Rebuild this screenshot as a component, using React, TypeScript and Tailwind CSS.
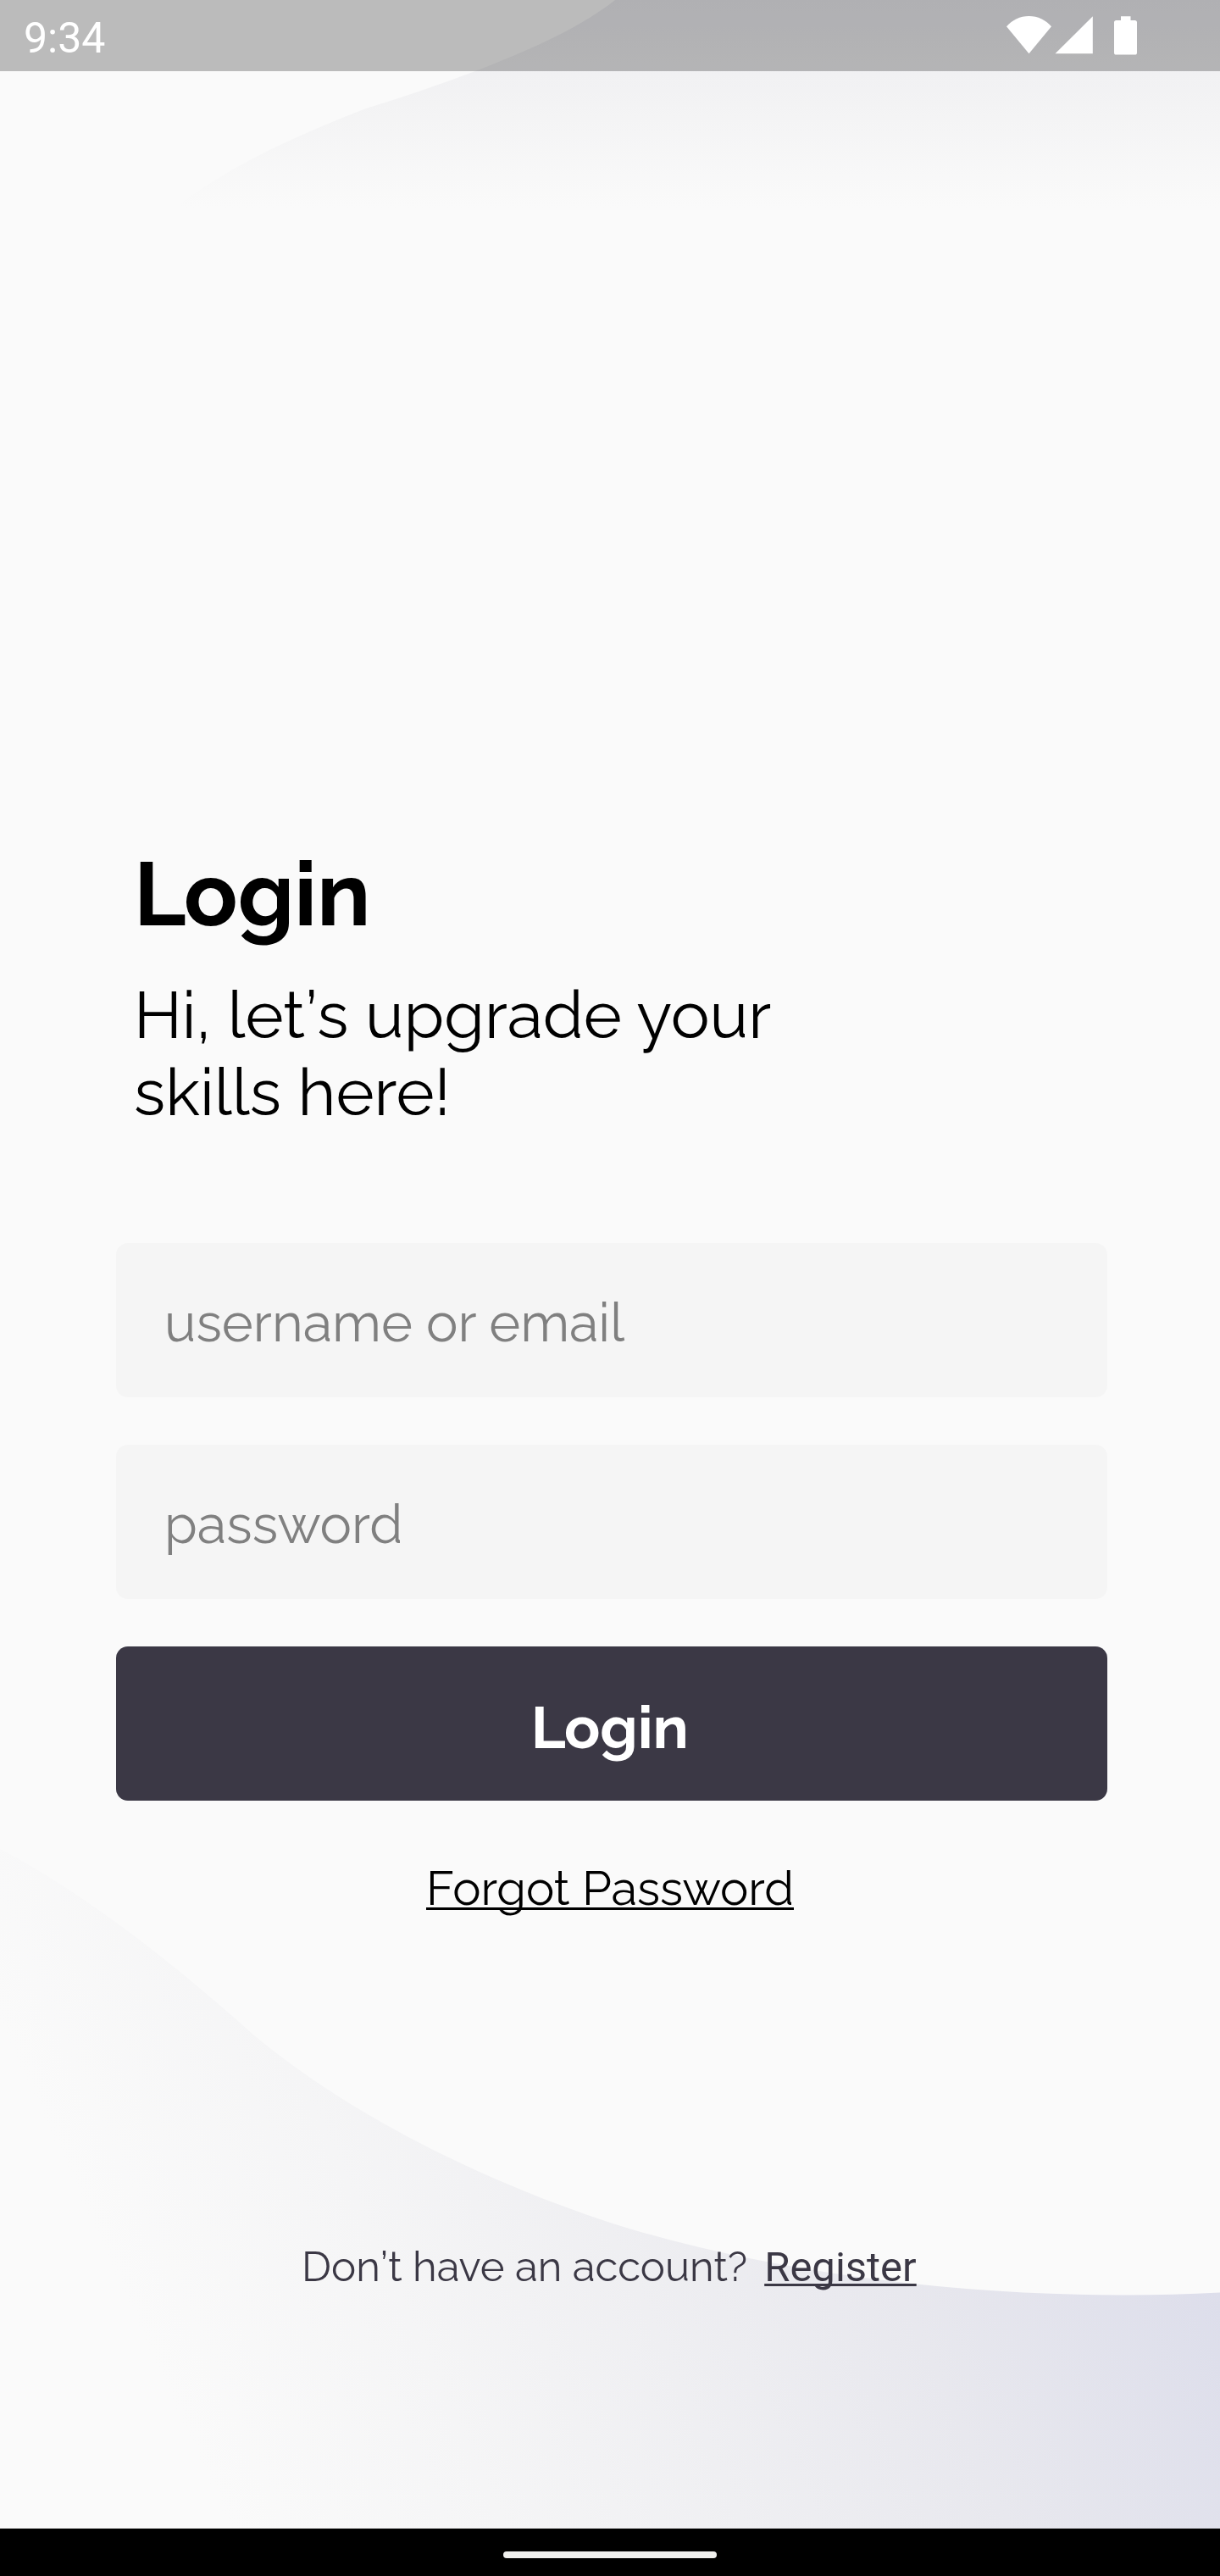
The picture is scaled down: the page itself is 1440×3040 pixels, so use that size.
import React from "react";

function Backdrop() {
  return (
    <svg
      className="absolute inset-0 h-full w-full"
      viewBox="0 0 1440 3040"
      fill="none"
      aria-hidden="true"
    >
      <defs>
        <linearGradient id="topWave" gradientUnits="userSpaceOnUse" x1="0" y1="0" x2="0" y2="245">
          <stop offset="0" stopColor="#ebebef" />
          <stop offset="0.36" stopColor="#f1f1f3" />
          <stop offset="0.5" stopColor="#f3f3f4" />
          <stop offset="1" stopColor="#fafafa" />
        </linearGradient>
        <linearGradient id="bottomWave" gradientUnits="userSpaceOnUse" x1="0" y1="2387" x2="1072" y2="1899">
          <stop offset="0" stopColor="#fafafa" />
          <stop offset="0.25" stopColor="#f5f5f6" />
          <stop offset="0.47" stopColor="#efeff2" />
          <stop offset="0.71" stopColor="#e8e8ee" />
          <stop offset="1" stopColor="#dddeeb" />
        </linearGradient>
      </defs>
      <path
        d="M726 0C670 45 560 88 432 128C350 160 270 195 200 250H1440V0Z"
        fill="url(#topWave)"
      />
      <path
        d="M0 2182C100 2234 205 2317 300 2402C400 2485 545 2565 720 2623C900 2680 1120 2708.5 1326 2708.5Q1385 2708.5 1440 2705.5V3040H0Z"
        fill="url(#bottomWave)"
      />
    </svg>
  );
}

function StatusBar() {
  return (
    <header className="flex h-[84px] items-center justify-between bg-black/25 pl-7 pr-[98px] text-white">
      <span className="pt-[5px] font-[Roboto,sans-serif] text-[50px] leading-none">9:34</span>
      <svg className="h-[84px] w-[154px]" viewBox="1188 0 154 84" fill="currentColor" aria-hidden="true">
        <path d="M1214.5 63.3L1188 31.2C1195 23.5 1204 19 1214.5 19S1234 23.5 1241 31.2Z" />
        <path d="M1245.5 63.3L1289.8 19.3V63.3Z" />
        <path d="M1323 19.2H1334.5V24H1339.5Q1342 24 1342 26.5V62Q1342 64.6 1339.5 64.6H1317.5Q1315 64.6 1315 62V26.5Q1315 24 1317.5 24H1323Z" />
      </svg>
    </header>
  );
}

function Field({ label }: { label: string }) {
  return (
    <div className="flex h-[182px] items-center rounded-[14px] bg-[#f5f5f5] pl-[57px] pt-1.5 text-[63px] leading-none text-[#808080]">
      {label}
    </div>
  );
}

function NavigationBar() {
  return (
    <footer className="flex h-14 items-center justify-center bg-black pt-1.5">
      <div className="h-2 w-[252px] rounded-full bg-[#f0f0ee]" />
    </footer>
  );
}

export default function App() {
  return (
    <div className="relative h-[3040px] w-[1440px] overflow-hidden bg-[#fafafa] font-[Raleway,sans-serif] text-black">
      <Backdrop />
      <div className="relative flex h-full flex-col">
        <StatusBar />
        <main className="flex flex-1 flex-col px-[137px] pt-[910px]">
          <div className="pl-[21px]">
            <h1 className="text-[105px] font-bold leading-[123px]">
              <span className="tracking-[-2.3px]">L</span>ogin
            </h1>
            <p className="mt-9 text-[77px] leading-[91px]">
              Hi, let<span className="tracking-[-0.5px]">’</span>s upgrade your
              <br />
              skills here!
            </p>
          </div>
          <form className="-mr-1 mt-[132px] flex flex-col gap-14">
            <Field label="username or email" />
            <Field label="password" />
            <button
              type="button"
              className="-ml-[0.5px] flex h-[182px] items-center justify-center rounded-[14px] bg-[#3b3845] pr-1 pt-2 text-[70px] font-bold leading-none text-white"
            >
              <span>
                <span className="tracking-[-1.6px]">L</span>ogin
              </span>
            </button>
          </form>
          <a className="mt-[70px] self-center text-[56px] leading-[66px] underline decoration-[3px] underline-offset-[3px] [text-decoration-skip-ink:none]">
            Forgot Password
          </a>
          <p className="mt-auto flex items-baseline gap-5 pb-[279px] pl-[219px] text-[49px] leading-[58px] text-[#3b3845]">
            <span>
              Don<span className="tracking-[0.1px]">’</span>t have an account?
            </span>
            <a className="font-[Roboto,sans-serif] [font-weight:450] underline decoration-[3px] underline-offset-[3px] [text-decoration-skip-ink:none]">
              Register
            </a>
          </p>
        </main>
        <NavigationBar />
      </div>
    </div>
  );
}
